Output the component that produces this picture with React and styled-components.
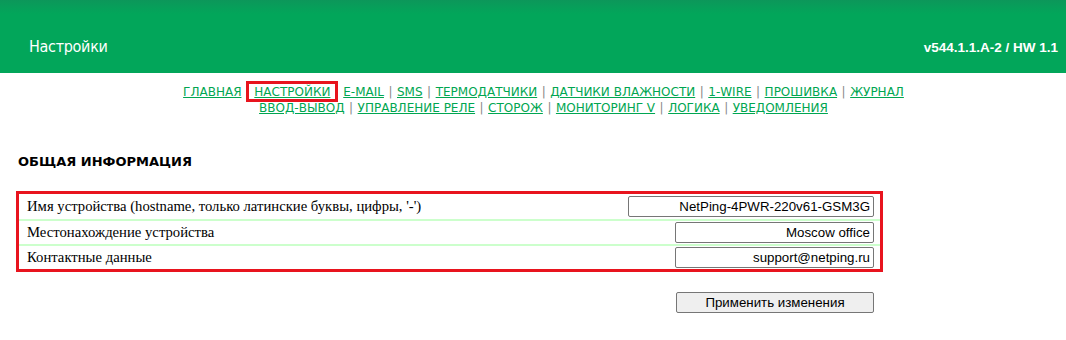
import React from 'react';
import styled, { createGlobalStyle } from 'styled-components';

const GlobalStyle = createGlobalStyle`
  * {
    margin: 0;
    padding: 0;
    box-sizing: border-box;
  }
  body {
    background: #fff;
    font-family: "DejaVu Sans", Verdana, sans-serif;
  }
`;

const Header = styled.header`
  height: 73px;
  background: linear-gradient(180deg, #0c975a 0px, #02a65a 14px, #02a65a 100%);
  display: flex;
  align-items: center;
  justify-content: space-between;
  padding: 19px 8px 0 29px;
  color: #fff;
`;

const PageTitle = styled.div`
  font-family: "DejaVu Sans Condensed", "Liberation Sans", sans-serif;
  font-size: 16px;
  letter-spacing: -0.3px;
`;

const Version = styled.div`
  font-family: "Liberation Sans", Arial, sans-serif;
  font-size: 13.5px;
  font-weight: bold;
  padding-top: 2px;
`;

const Nav = styled.nav`
  padding: 11px 0 0 21px;
  text-align: center;
  font-size: 12px;
  line-height: 16px;
  color: #888;
`;

const NavLink = styled.a`
  color: #00a651;
  text-decoration: underline;
  padding: ${p => (p.$active ? '1px 5px 0' : '0')};
  border: ${p => (p.$active ? '3px solid #e8141e' : 'none')};
`;

const Sep = styled.span`
  margin: 0 ${p => (p.$gap ? '0.5px' : '4.5px')};
`;

const Content = styled.main`
  padding: 38px 0 0 16px;
`;

const SectionTitle = styled.h2`
  font-size: 13px;
  font-weight: bold;
  color: #000;
  padding-left: 2px;
  margin-bottom: 22px;
`;

const Table = styled.div`
  width: 867px;
  border: 3px solid #e8141e;
  display: flex;
  flex-direction: column;
`;

const Row = styled.div`
  height: 25px;
  display: flex;
  align-items: center;
  justify-content: space-between;
  padding: 0 6px 0 8px;
  border-top: ${p => (p.$first ? 'none' : '2px solid #ccffcc')};
`;

const Label = styled.span`
  font-family: "Liberation Serif", "Times New Roman", serif;
  font-size: 14.7px;
  color: #000;
`;

const Input = styled.input`
  width: ${p => p.$w}px;
  height: 21px;
  border: 1px solid #767676;
  border-radius: 2px;
  font-family: "Liberation Sans", Arial, sans-serif;
  font-size: 13.3px;
  text-align: right;
  padding: 0 3px;
  color: #000;
  background: #fff;
`;

const Actions = styled.div`
  width: 867px;
  display: flex;
  justify-content: flex-end;
  padding: 20px 9px 0 0;
`;

const Button = styled.button`
  width: 198px;
  height: 21px;
  border: 1px solid #767676;
  border-radius: 2px;
  background: #efefef;
  font-family: "Liberation Sans", Arial, sans-serif;
  font-size: 13.3px;
  color: #000;
`;

const links1 = ['ГЛАВНАЯ', 'НАСТРОЙКИ', 'E-MAIL', 'SMS', 'ТЕРМОДАТЧИКИ', 'ДАТЧИКИ ВЛАЖНОСТИ', '1-WIRE', 'ПРОШИВКА', 'ЖУРНАЛ'];
const links2 = ['ВВОД-ВЫВОД', 'УПРАВЛЕНИЕ РЕЛЕ', 'СТОРОЖ', 'МОНИТОРИНГ V', 'ЛОГИКА', 'УВЕДОМЛЕНИЯ'];

const ACTIVE = 'НАСТРОЙКИ';

const fields = [
  { label: "Имя устройства (hostname, только латинские буквы, цифры, '-')", value: 'NetPing-4PWR-220v61-GSM3G', w: 246 },
  { label: 'Местонахождение устройства', value: 'Moscow office', w: 199 },
  { label: 'Контактные данные', value: 'support@netping.ru', w: 199 },
];

function NavLine({ items }) {
  return (
    <div>
      {items.map((name, i) => {
        const nearActive = name === ACTIVE || items[i - 1] === ACTIVE;
        return (
          <React.Fragment key={name}>
            {i > 0 && <Sep $gap={nearActive}>{nearActive ? ' ' : '|'}</Sep>}
            <NavLink href="#" $active={name === ACTIVE}>{name}</NavLink>
          </React.Fragment>
        );
      })}
    </div>
  );
}

export default function App() {
  return (
    <div>
      <GlobalStyle />
      <Header>
        <PageTitle>Настройки</PageTitle>
        <Version>v544.1.1.A-2 / HW 1.1</Version>
      </Header>
      <Nav>
        <NavLine items={links1} />
        <NavLine items={links2} />
      </Nav>
      <Content>
        <SectionTitle>ОБЩАЯ ИНФОРМАЦИЯ</SectionTitle>
        <Table>
          {fields.map((f, i) => (
            <Row key={f.label} $first={i === 0}>
              <Label>{f.label}</Label>
              <Input $w={f.w} defaultValue={f.value} />
            </Row>
          ))}
        </Table>
        <Actions>
          <Button>Применить изменения</Button>
        </Actions>
      </Content>
    </div>
  );
}
